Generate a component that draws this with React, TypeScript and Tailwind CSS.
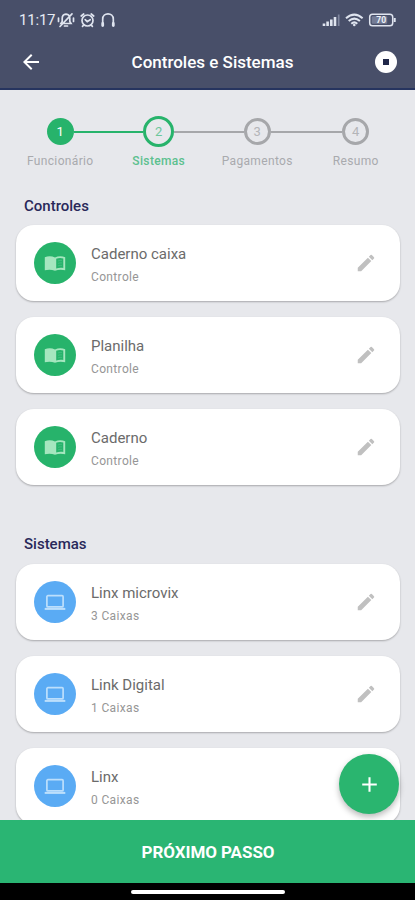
import React from "react";
import { MdArrowBack, MdEdit, MdAdd } from "react-icons/md";

const BookIcon = () => (
  <svg width="22" height="18" viewBox="0 0 22 18" fill="#a5e6bf">
    <path d="M0.800 3.200C4 1.800 7.800 1.800 11 3.400C14.200 1.800 18 1.800 21.200 3.200V16.200C18 15.400 14.200 15.400 11 16.700C7.800 15.400 4 15.400 0.800 16.200Z" />
    <path d="M12.200 4.800C14.300 3.700 17 3.700 19.300 4.400V14C17 13.600 14.300 13.700 12.200 14.600Z" fill="#27b36b" />
    <path d="M14 6.900Q15.800 6.100 18 6.400M14 9.400Q15.800 8.600 18 8.900M14 11.900Q15.800 11.100 18 11.400" fill="none" stroke="#45c183" strokeWidth="0.800" />
  </svg>
);

const LaptopIcon = () => (
  <svg width="22" height="18" viewBox="0 0 22 18" fill="none" stroke="#bcdffc">
    <rect x="2.900" y="2.700" width="16.200" height="11.200" rx="1" strokeWidth="1.700" />
    <path d="M0.700 15.900H21.300" strokeWidth="2" />
  </svg>
);

const StatusLeft = () => (
  <svg width="62" height="18" viewBox="0 0 62 18" fill="none" stroke="#dfe4ef" strokeWidth="1.700" strokeLinecap="round">
    <path d="M5 12.500H15L13.800 10.500V7.500C13.800 5 12.500 3.500 10 3.200C7.500 3.500 6.200 5 6.200 7.500V10.500ZM8.500 15H11.500M4 15.500L16 2.800M2.500 7V10.500M17.500 7V10.500" />
    <circle cx="31.500" cy="9.500" r="5.500" />
    <path d="M25.200 5L27.700 3M37.700 5L35.200 3M29.200 8.700L31.200 10.700L34.200 8.700M27.700 14L26.500 15.300M35.200 14L36.400 15.300" />
    <path d="M46.700 12V8.200C46.700 1.200 57.300 1.200 57.300 8.200V12" strokeWidth="1.700" />
    <path d="M46.700 12.500V14.500M57.300 12.500V14.500" strokeWidth="2.800" />
  </svg>
);

const StatusRight = () => (
  <svg width="76" height="16" viewBox="0 0 76 16" fill="none" stroke="#dfe4ef">
    <path d="M3 11.500V14M6.600 9.500V14M10.300 7.500V14M14 5V14" strokeWidth="2.600" />
    <path d="M17.700 2.500V14" strokeWidth="1.700" stroke="#7f869e" />
    <path d="M25 6.200Q33.300 -1 41.600 6.200M27.700 9Q33.300 4.200 38.900 9M30.300 11.700Q33.300 9 36.300 11.700" strokeWidth="2" />
    <circle cx="33.300" cy="13" r="1.300" fill="#dfe4ef" stroke="none" />
    <rect x="48.700" y="2.300" width="23" height="11.400" rx="2.800" strokeWidth="1.500" />
    <rect x="50.700" y="4.300" width="15.500" height="7.400" rx="1" fill="#747c96" stroke="none" />
    <path d="M73.700 6V10" strokeWidth="2" />
    <text x="60.200" y="11.300" fontSize="8.500" fontWeight="700" textAnchor="middle" fill="#eef1f7" stroke="none">70</text>
  </svg>
);

type StepState = "done" | "current" | "todo";

const circleStyles: Record<StepState, string> = {
  done: "size-[27px] bg-[#27b36b] text-white",
  current: "size-[31px] border-[3px] border-[#27b36b] text-[#6cc79b]",
  todo: "size-[27px] border-[3px] border-[#a6a7aa] text-[#b4b5b8]",
};

function Step({ n, label, state }: { n: number; label: string; state: StepState }) {
  return (
    <div className="flex w-[98.500px] flex-col items-center">
      <div className="flex h-[31px] w-full items-center">
        <div className={`h-[2px] flex-1 ${n === 1 ? "" : n === 2 ? "bg-[#27b36b]" : "bg-[#a6a7aa]"}`} />
        <div className={`flex shrink-0 items-center justify-center rounded-full pt-px text-[13px] ${circleStyles[state]}`}>{n}</div>
        <div className={`h-[2px] flex-1 ${n === 4 ? "" : n === 1 ? "bg-[#27b36b]" : "bg-[#a6a7aa]"}`} />
      </div>
      <span className={`mt-[6px] text-[12px] leading-[16px] ${state === "current" ? "font-medium tracking-[0.350px] text-[#5cc08f]" : "tracking-[0.350px] text-[#a9aaae]"}`}>
        {label}
      </span>
    </div>
  );
}

function Card({ title, detail, kind }: { title: string; detail: string; kind: "book" | "laptop" }) {
  return (
    <div className="flex h-[76px] shrink-0 items-center rounded-[18px] bg-white pr-[23px] pl-[18px] shadow-[0_1px_2px_rgba(0,0,0,0.280)]">
      <div className={`flex size-[42px] items-center justify-center rounded-full ${kind === "book" ? "bg-[#27b36b]" : "bg-[#5aabf4]"}`}>
        {kind === "book" ? <BookIcon /> : <LaptopIcon />}
      </div>
      <div className="ml-[15px] flex-1 pt-[3px]">
        <div className="text-[15px] leading-[22px] text-[#6b6b6b]">{title}</div>
        <div className="mt-[2px] text-[12px] leading-[20px] tracking-[0.350px] text-[#969696]">{detail}</div>
      </div>
      <MdEdit size={22} color="#c0c0c0" />
    </div>
  );
}

export default function App() {
  return (
    <div className="relative flex h-[900px] w-[415px] flex-col overflow-hidden bg-[#e7e8ec] font-['Roboto',sans-serif]">
      <header className="h-[90px] shrink-0 border-b-2 border-[#26345f] bg-[#484f69] text-white">
        <div className="flex h-[40px] items-center pr-[18px] pl-[19px] text-[#e6eaf3]">
          <span className="w-[37px] text-[15px] tracking-[-0.200px] whitespace-nowrap">11:17</span>
          <StatusLeft />
          <div className="ml-auto"><StatusRight /></div>
        </div>
        <div className="flex h-[44px] items-center justify-between pr-[18px] pl-[19px]">
          <MdArrowBack size={24} />
          <h1 className="ml-[7px] pt-px text-[17px] font-medium">Controles e Sistemas</h1>
          <div className="flex size-[22px] items-center justify-center rounded-full bg-white">
            <div className="size-[6px] bg-[#202849]" />
          </div>
        </div>
      </header>

      <div className="flex shrink-0 pt-[26px] pl-[11px]">
        <Step n={1} label="Funcionário" state="done" />
        <Step n={2} label="Sistemas" state="current" />
        <Step n={3} label="Pagamentos" state="todo" />
        <Step n={4} label="Resumo" state="todo" />
      </div>

      <main className="flex min-h-0 flex-1 flex-col overflow-hidden pr-[15px] pl-4">
        <h2 className="mt-[27px] mb-[9px] ml-2 text-[15px] leading-[20px] font-medium text-[#29285a]">Controles</h2>
        <div className="flex flex-col gap-4">
          <Card title="Caderno caixa" detail="Controle" kind="book" />
          <Card title="Planilha" detail="Controle" kind="book" />
          <Card title="Caderno" detail="Controle" kind="book" />
        </div>
        <h2 className="mt-[49px] mb-[10px] ml-2 text-[15px] leading-[20px] font-medium text-[#29285a]">Sistemas</h2>
        <div className="flex flex-col gap-4">
          <Card title="Linx microvix" detail="3 Caixas" kind="laptop" />
          <Card title="Link Digital" detail="1 Caixas" kind="laptop" />
          <Card title="Linx" detail="0 Caixas" kind="laptop" />
        </div>
      </main>

      <button className="absolute top-[754px] left-[339px] flex size-[60px] items-center justify-center rounded-full bg-[#2ab56f] text-white shadow-[0_3px_6px_rgba(0,0,0,0.280)]">
        <MdAdd size={25} />
      </button>
      <button className="relative h-[63px] shrink-0 bg-[#2ab573] pt-[2px] pl-px text-[17px] font-bold tracking-[-0.050px] text-white">PRÓXIMO PASSO</button>
      <div className="flex h-[17px] shrink-0 justify-center bg-black pt-[7px]">
        <div className="h-[4px] w-[154px] rounded-full bg-white" />
      </div>
    </div>
  );
}
